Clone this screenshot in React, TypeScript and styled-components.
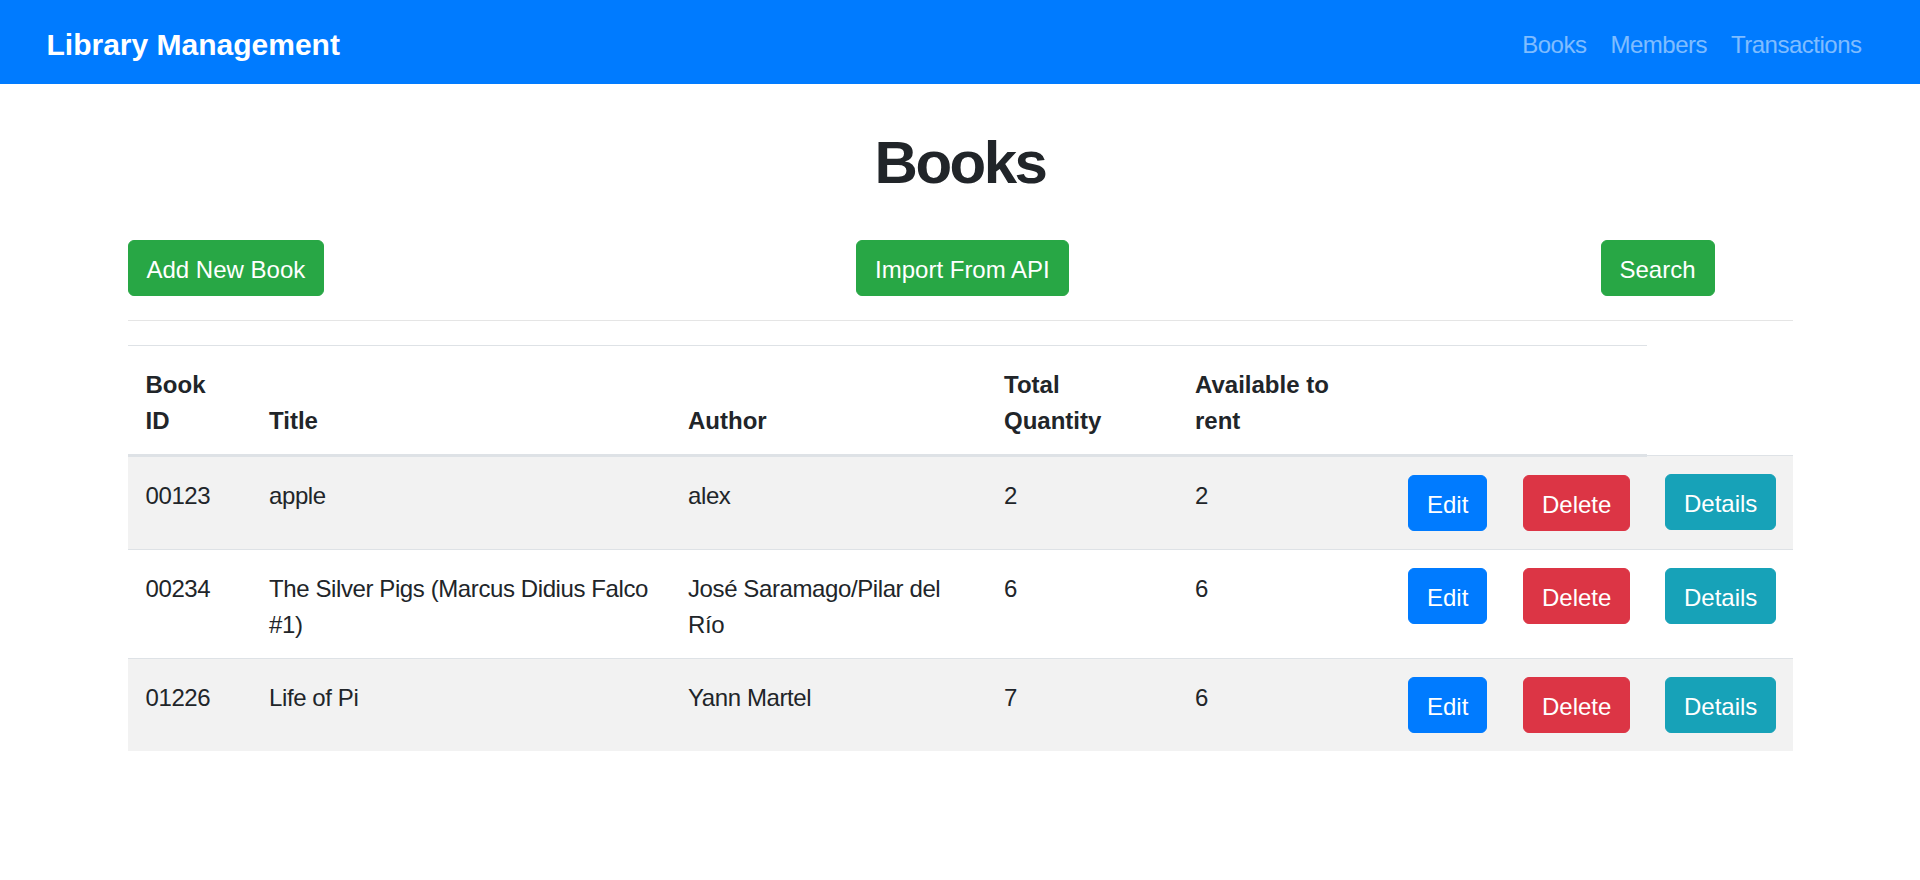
import React from "react";
import styled, { createGlobalStyle } from "styled-components";

const GlobalStyle = createGlobalStyle`
  html, body { margin: 0; padding: 0; background: #fff; }
  body {
    font-family: "Liberation Sans", Arial, sans-serif;
    font-size: 24px;
    line-height: 1.5;
    color: #212529;
  }
  * { box-sizing: border-box; }
`;

const Navbar = styled.nav`
  display: flex;
  align-items: center;
  justify-content: space-between;
  background: #007bff;
  padding: 12px 46.5px;
  height: 84px;
`;

const Brand = styled.a`
  font-size: 30px;
  font-weight: 700;
  line-height: 45px;
  padding: 10px 0 5px;
  color: #fff;
  text-decoration: none;
`;

const NavList = styled.ul`
  display: flex;
  list-style: none;
  margin: 0;
  padding: 0;
`;

const NavLink = styled.a`
  display: block;
  padding: 14.5px 12px 9.5px;
  line-height: 36px;
  letter-spacing: -0.5px;
  color: rgba(255, 255, 255, 0.5);
  text-decoration: none;
`;

const Container = styled.main`
  width: 1665px;
  margin: 0 auto;
`;

const Title = styled.h1`
  text-align: center;
  font-size: 60px;
  font-weight: 700;
  line-height: 72px;
  letter-spacing: -2.5px;
  margin: 43px 0 41px;
`;

const Toolbar = styled.div`
  display: flex;
  justify-content: space-between;
  align-items: flex-start;
`;

const SearchForm = styled.form`
  width: 192px;
  margin: 0;
`;

const variants: Record<string, string> = {
  success: "#28a745",
  primary: "#007bff",
  danger: "#dc3545",
  info: "#17a2b8",
};

const Button = styled.button<{ $variant: keyof typeof variants }>`
  display: inline-block;
  font-family: inherit;
  font-size: 24px;
  font-weight: 400;
  line-height: 36px;
  letter-spacing: normal;
  padding: 11px 18px 7px;
  border: 1px solid ${(p) => variants[p.$variant]};
  border-radius: 6px;
  background: ${(p) => variants[p.$variant]};
  color: #fff;
  cursor: pointer;
  white-space: nowrap;
`;

const Divider = styled.hr`
  margin: 24px 0;
  border: 0;
  border-top: 1px solid rgba(0, 0, 0, 0.1);
`;

const Table = styled.table`
  width: 100%;
  border-collapse: collapse;
  table-layout: fixed;
  color: #212529;
`;

const HeadCell = styled.th`
  padding: 20.5px 18px 15.5px;
  text-align: left;
  vertical-align: bottom;
  font-weight: 700;
  border-top: 1px solid #dee2e6;
  border-bottom: 3px solid #dee2e6;
`;

const Row = styled.tr`
  &:nth-of-type(odd) { background: rgba(0, 0, 0, 0.05); }
`;

const Cell = styled.td`
  padding: 20.5px 18px 15.5px;
  vertical-align: top;
  border-top: 1px solid #dee2e6;
  letter-spacing: -0.4px;
`;

const ActionCell = styled(Cell)`
  padding: 18px;
`;

const colWidths = [123.5, 419, 316, 191, 213, 115, 142, 146];

const books = [
  { id: "00123", title: "apple", author: "alex", total: 2, available: 2 },
  {
    id: "00234",
    title: "The Silver Pigs (Marcus Didius Falco #1)",
    author: "José Saramago/Pilar del Río",
    total: 6,
    available: 6,
  },
  { id: "01226", title: "Life of Pi", author: "Yann Martel", total: 7, available: 6 },
];

export default function App() {
  return (
    <>
      <GlobalStyle />
      <Navbar>
        <Brand href="#">Library Management</Brand>
        <NavList>
          <li><NavLink href="#">Books</NavLink></li>
          <li><NavLink href="#">Members</NavLink></li>
          <li><NavLink href="#">Transactions</NavLink></li>
        </NavList>
      </Navbar>
      <Container>
        <Title>Books</Title>
        <Toolbar>
          <Button $variant="success">Add New Book</Button>
          <Button $variant="success">Import From API</Button>
          <SearchForm onSubmit={(e) => e.preventDefault()}>
            <Button $variant="success" type="submit">Search</Button>
          </SearchForm>
        </Toolbar>
        <Divider />
        <Table>
          <colgroup>
            {colWidths.map((w, i) => (
              <col key={i} style={{ width: w }} />
            ))}
          </colgroup>
          <thead>
            <tr>
              <HeadCell>Book ID</HeadCell>
              <HeadCell>Title</HeadCell>
              <HeadCell>Author</HeadCell>
              <HeadCell>Total Quantity</HeadCell>
              <HeadCell>Available to rent</HeadCell>
              <HeadCell />
              <HeadCell />
            </tr>
          </thead>
          <tbody>
            {books.map((b) => (
              <Row key={b.id}>
                <Cell>{b.id}</Cell>
                <Cell>{b.title}</Cell>
                <Cell>{b.author}</Cell>
                <Cell>{b.total}</Cell>
                <Cell>{b.available}</Cell>
                <ActionCell><Button $variant="primary">Edit</Button></ActionCell>
                <ActionCell><Button $variant="danger">Delete</Button></ActionCell>
                <ActionCell><Button $variant="info">Details</Button></ActionCell>
              </Row>
            ))}
          </tbody>
        </Table>
      </Container>
    </>
  );
}
